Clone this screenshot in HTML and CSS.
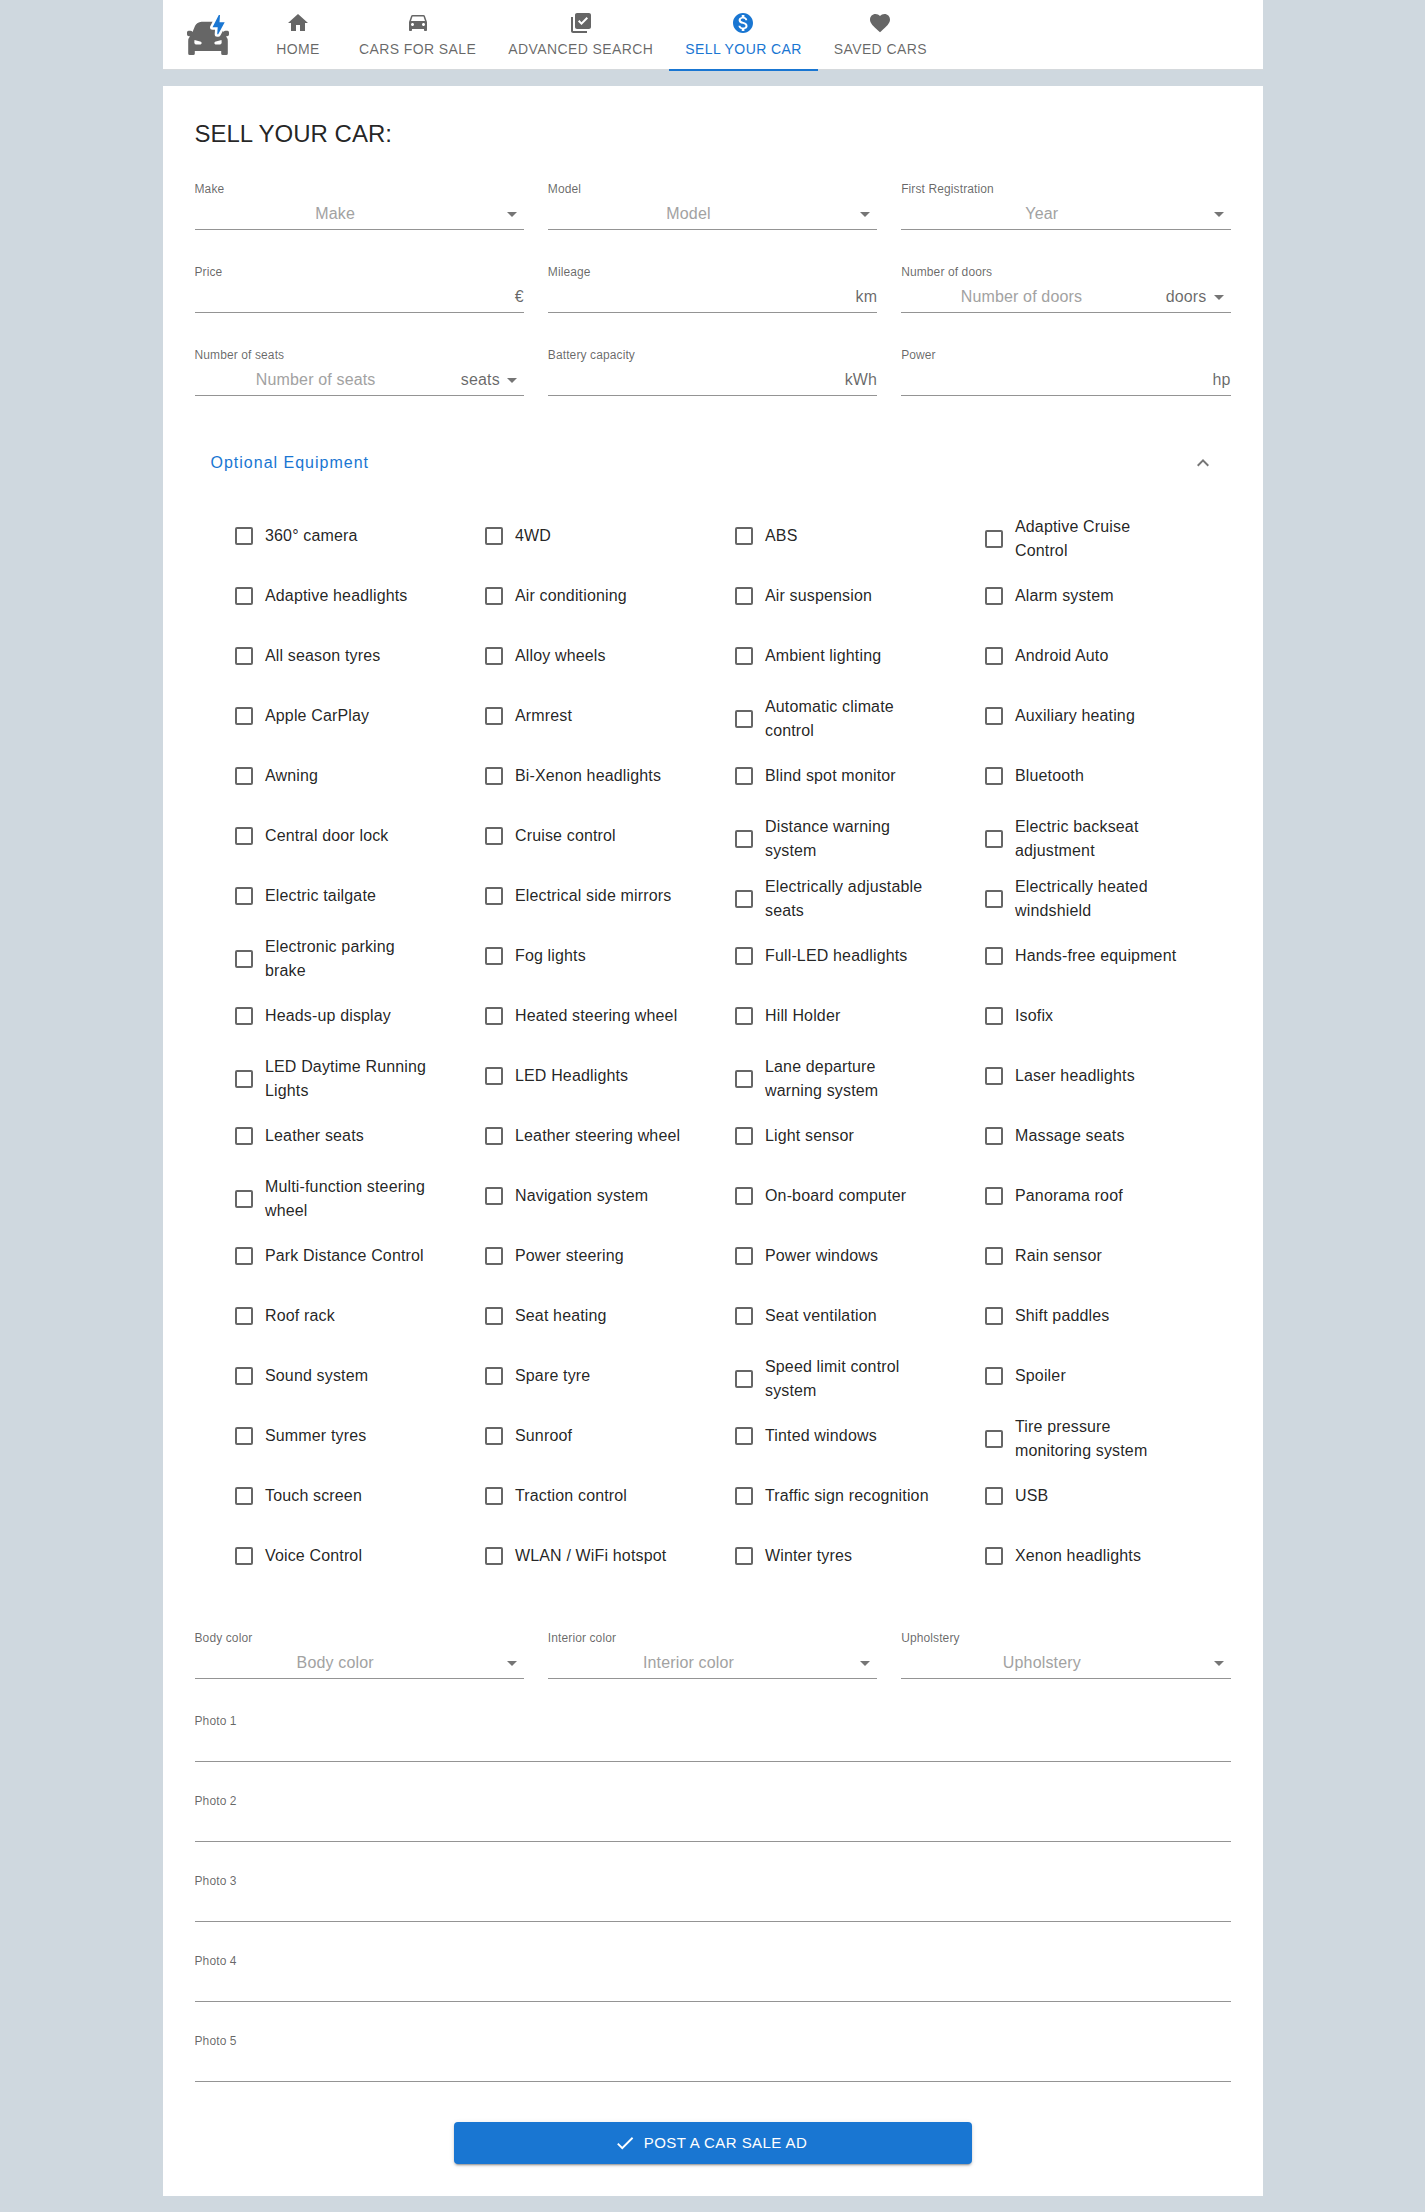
FILE: index.html
```html
<!DOCTYPE html>
<html lang="en">
<head>
<meta charset="utf-8">
<title>Sell your car</title>
<link rel="stylesheet" href="styles.css">
</head>
<body>
<header class="topbar">
  <svg class="logo" viewBox="0 0 42 41" width="42" height="41">
    <path class="logo-body" fill-rule="evenodd" d="M27.500 6.700H14.500Q10 7 8 11L5.500 17Q4.800 15.800 3.500 15.800H1.500Q0 15.800 0 17.500V19.500Q0 21.300 2 21.300H3Q1.200 23.500 1.200 26V38.500Q1.200 40 2.700 40H6.300Q7.800 40 7.800 38.500V36H34.200V38.500Q34.200 40 35.700 40H39.300Q40.800 40 40.800 38.500V26Q40.800 23.500 39 21.300H40Q42 21.300 42 19.500V17.500Q42 15.800 40.500 15.800H38.500Q37.200 15.800 36.500 17L34 11Q32 7 27.500 6.700ZM7.500 25L14 26.800Q15.500 28.500 13.500 29.500H9Q7.500 29.300 7.300 27.500ZM34.500 25L28 26.800Q26.500 28.500 28.500 29.500H33Q34.500 29.300 34.700 27.500Z"/>
    <path class="logo-bolt" d="M31.800 0H33L32.500 7.300H37.700L31.200 19.300H30.200L30.700 12.300H25.500Z"/>
  </svg>
  <nav class="tabs">
    <a class="tab"><svg class="icon" viewBox="0 0 24 24"><path d="M10 20v-6h4v6h5v-8h3L12 3 2 12h3v8z"/></svg>HOME</a>
    <a class="tab"><svg class="icon" viewBox="0 0 24 24"><path d="M18.920 5.010C18.720 4.420 18.160 4 17.500 4h-11c-.66 0-1.210.42-1.420 1.010L3 11v8c0 .55.45 1 1 1h1c.55 0 1-.45 1-1v-1h12v1c0 .55.45 1 1 1h1c.55 0 1-.45 1-1v-8l-2.080-5.990zM6.500 15c-.83 0-1.500-.67-1.500-1.500S5.670 12 6.500 12s1.500.67 1.500 1.500S7.330 15 6.500 15zm11 0c-.83 0-1.500-.67-1.500-1.500s.67-1.500 1.500-1.500 1.500.67 1.500 1.500-.67 1.500-1.500 1.500zM5 10l1.500-4.500h11L19 10H5z"/></svg>CARS FOR SALE</a>
    <a class="tab"><svg class="icon" viewBox="0 0 24 24"><path d="M20 2H8c-1.100 0-2 .9-2 2v12c0 1.100.9 2 2 2h12c1.100 0 2-.9 2-2V4c0-1.100-.9-2-2-2zm-7.530 12L9 10.500l1.400-1.410 2.070 2.080L17.600 6 19 7.410 12.470 14zM4 6H2v14c0 1.100.9 2 2 2h14v-2H4V6z"/></svg>ADVANCED SEARCH</a>
    <a class="tab active"><svg class="icon" viewBox="0 0 24 24"><path d="M12 2C6.480 2 2 6.480 2 12s4.480 10 10 10 10-4.480 10-10S17.520 2 12 2zm1.410 16.090V20h-2.670v-1.930c-1.710-.36-3.160-1.460-3.270-3.400h1.960c.1 1.050.82 1.870 2.650 1.870 1.960 0 2.400-.98 2.400-1.590 0-.83-.44-1.610-2.670-2.140-2.480-.6-4.180-1.620-4.180-3.670 0-1.720 1.390-2.840 3.110-3.210V4h2.670v1.950c1.860.45 2.790 1.860 2.850 3.390H14.300c-.05-1.110-.64-1.870-2.220-1.870-1.500 0-2.400.68-2.400 1.640 0 .84.65 1.390 2.670 1.910s4.180 1.390 4.180 3.910c-.01 1.830-1.380 2.830-3.120 3.160z"/></svg>SELL YOUR CAR</a>
    <a class="tab"><svg class="icon" viewBox="0 0 24 24"><path d="m12 21.350-1.450-1.320C5.400 15.360 2 12.280 2 8.500 2 5.420 4.420 3 7.500 3c1.740 0 3.410.81 4.500 2.090C13.090 3.810 14.760 3 16.500 3 19.580 3 22 5.420 22 8.500c0 3.780-3.400 6.860-8.550 11.540L12 21.350z"/></svg>SAVED CARS</a>
  </nav>
</header>

<main class="card">
  <h1 class="title">SELL YOUR CAR:</h1>

  <div class="fields">
    <div class="field"><span class="label">Make</span><div class="control"><span class="value">Make</span><svg class="icon" viewBox="0 0 24 24"><path d="m7 10 5 5 5-5z"/></svg></div></div>
    <div class="field"><span class="label">Model</span><div class="control"><span class="value">Model</span><svg class="icon" viewBox="0 0 24 24"><path d="m7 10 5 5 5-5z"/></svg></div></div>
    <div class="field"><span class="label">First Registration</span><div class="control"><span class="value">Year</span><svg class="icon" viewBox="0 0 24 24"><path d="m7 10 5 5 5-5z"/></svg></div></div>
    <div class="field"><span class="label">Price</span><div class="control"><span class="value"></span><span class="unit">€</span></div></div>
    <div class="field"><span class="label">Mileage</span><div class="control"><span class="value"></span><span class="unit">km</span></div></div>
    <div class="field"><span class="label">Number of doors</span><div class="control"><span class="value">Number of doors</span><span class="unit">doors</span><svg class="icon" viewBox="0 0 24 24"><path d="m7 10 5 5 5-5z"/></svg></div></div>
    <div class="field"><span class="label">Number of seats</span><div class="control"><span class="value">Number of seats</span><span class="unit">seats</span><svg class="icon" viewBox="0 0 24 24"><path d="m7 10 5 5 5-5z"/></svg></div></div>
    <div class="field"><span class="label">Battery capacity</span><div class="control"><span class="value"></span><span class="unit">kWh</span></div></div>
    <div class="field"><span class="label">Power</span><div class="control"><span class="value"></span><span class="unit">hp</span></div></div>
  </div>

  <section class="equipment">
    <div class="equipment-head"><span>Optional Equipment</span><svg class="icon" viewBox="0 0 24 24"><path d="m12 8-6 6 1.410 1.410L12 10.830l4.590 4.580L18 14z"/></svg></div>
    <div class="options">
      <label class="option"><i class="box"></i><span>360° camera</span></label>
      <label class="option"><i class="box"></i><span>4WD</span></label>
      <label class="option"><i class="box"></i><span>ABS</span></label>
      <label class="option"><i class="box"></i><span>Adaptive Cruise Control</span></label>
      <label class="option"><i class="box"></i><span>Adaptive headlights</span></label>
      <label class="option"><i class="box"></i><span>Air conditioning</span></label>
      <label class="option"><i class="box"></i><span>Air suspension</span></label>
      <label class="option"><i class="box"></i><span>Alarm system</span></label>
      <label class="option"><i class="box"></i><span>All season tyres</span></label>
      <label class="option"><i class="box"></i><span>Alloy wheels</span></label>
      <label class="option"><i class="box"></i><span>Ambient lighting</span></label>
      <label class="option"><i class="box"></i><span>Android Auto</span></label>
      <label class="option"><i class="box"></i><span>Apple CarPlay</span></label>
      <label class="option"><i class="box"></i><span>Armrest</span></label>
      <label class="option"><i class="box"></i><span>Automatic climate control</span></label>
      <label class="option"><i class="box"></i><span>Auxiliary heating</span></label>
      <label class="option"><i class="box"></i><span>Awning</span></label>
      <label class="option"><i class="box"></i><span>Bi-Xenon headlights</span></label>
      <label class="option"><i class="box"></i><span>Blind spot monitor</span></label>
      <label class="option"><i class="box"></i><span>Bluetooth</span></label>
      <label class="option"><i class="box"></i><span>Central door lock</span></label>
      <label class="option"><i class="box"></i><span>Cruise control</span></label>
      <label class="option"><i class="box"></i><span>Distance warning system</span></label>
      <label class="option"><i class="box"></i><span>Electric backseat adjustment</span></label>
      <label class="option"><i class="box"></i><span>Electric tailgate</span></label>
      <label class="option"><i class="box"></i><span>Electrical side mirrors</span></label>
      <label class="option"><i class="box"></i><span>Electrically adjustable seats</span></label>
      <label class="option"><i class="box"></i><span>Electrically heated windshield</span></label>
      <label class="option"><i class="box"></i><span>Electronic parking brake</span></label>
      <label class="option"><i class="box"></i><span>Fog lights</span></label>
      <label class="option"><i class="box"></i><span>Full-LED headlights</span></label>
      <label class="option"><i class="box"></i><span>Hands-free equipment</span></label>
      <label class="option"><i class="box"></i><span>Heads-up display</span></label>
      <label class="option"><i class="box"></i><span>Heated steering wheel</span></label>
      <label class="option"><i class="box"></i><span>Hill Holder</span></label>
      <label class="option"><i class="box"></i><span>Isofix</span></label>
      <label class="option"><i class="box"></i><span>LED Daytime Running Lights</span></label>
      <label class="option"><i class="box"></i><span>LED Headlights</span></label>
      <label class="option"><i class="box"></i><span>Lane departure warning system</span></label>
      <label class="option"><i class="box"></i><span>Laser headlights</span></label>
      <label class="option"><i class="box"></i><span>Leather seats</span></label>
      <label class="option"><i class="box"></i><span>Leather steering wheel</span></label>
      <label class="option"><i class="box"></i><span>Light sensor</span></label>
      <label class="option"><i class="box"></i><span>Massage seats</span></label>
      <label class="option"><i class="box"></i><span>Multi-function steering wheel</span></label>
      <label class="option"><i class="box"></i><span>Navigation system</span></label>
      <label class="option"><i class="box"></i><span>On-board computer</span></label>
      <label class="option"><i class="box"></i><span>Panorama roof</span></label>
      <label class="option"><i class="box"></i><span>Park Distance Control</span></label>
      <label class="option"><i class="box"></i><span>Power steering</span></label>
      <label class="option"><i class="box"></i><span>Power windows</span></label>
      <label class="option"><i class="box"></i><span>Rain sensor</span></label>
      <label class="option"><i class="box"></i><span>Roof rack</span></label>
      <label class="option"><i class="box"></i><span>Seat heating</span></label>
      <label class="option"><i class="box"></i><span>Seat ventilation</span></label>
      <label class="option"><i class="box"></i><span>Shift paddles</span></label>
      <label class="option"><i class="box"></i><span>Sound system</span></label>
      <label class="option"><i class="box"></i><span>Spare tyre</span></label>
      <label class="option"><i class="box"></i><span>Speed limit control system</span></label>
      <label class="option"><i class="box"></i><span>Spoiler</span></label>
      <label class="option"><i class="box"></i><span>Summer tyres</span></label>
      <label class="option"><i class="box"></i><span>Sunroof</span></label>
      <label class="option"><i class="box"></i><span>Tinted windows</span></label>
      <label class="option"><i class="box"></i><span>Tire pressure monitoring system</span></label>
      <label class="option"><i class="box"></i><span>Touch screen</span></label>
      <label class="option"><i class="box"></i><span>Traction control</span></label>
      <label class="option"><i class="box"></i><span>Traffic sign recognition</span></label>
      <label class="option"><i class="box"></i><span>USB</span></label>
      <label class="option"><i class="box"></i><span>Voice Control</span></label>
      <label class="option"><i class="box"></i><span>WLAN / WiFi hotspot</span></label>
      <label class="option"><i class="box"></i><span>Winter tyres</span></label>
      <label class="option"><i class="box"></i><span>Xenon headlights</span></label>
    </div>
  </section>

  <div class="fields">
    <div class="field"><span class="label">Body color</span><div class="control"><span class="value">Body color</span><svg class="icon" viewBox="0 0 24 24"><path d="m7 10 5 5 5-5z"/></svg></div></div>
    <div class="field"><span class="label">Interior color</span><div class="control"><span class="value">Interior color</span><svg class="icon" viewBox="0 0 24 24"><path d="m7 10 5 5 5-5z"/></svg></div></div>
    <div class="field"><span class="label">Upholstery</span><div class="control"><span class="value">Upholstery</span><svg class="icon" viewBox="0 0 24 24"><path d="m7 10 5 5 5-5z"/></svg></div></div>
  </div>

  <div class="photos">
    <div class="field"><span class="label">Photo 1</span><div class="control"></div></div>
    <div class="field"><span class="label">Photo 2</span><div class="control"></div></div>
    <div class="field"><span class="label">Photo 3</span><div class="control"></div></div>
    <div class="field"><span class="label">Photo 4</span><div class="control"></div></div>
    <div class="field"><span class="label">Photo 5</span><div class="control"></div></div>
  </div>

  <button class="submit"><svg class="submit-icon" viewBox="0 0 24 24"><path d="M9 16.170 4.830 12l-1.420 1.410L9 19 21 7l-1.410-1.410z"/></svg>POST A CAR SALE AD</button>
</main>
</body>
</html>
```

FILE: styles.css
```css
* { box-sizing: border-box; }
body {
  margin: 0;
  background: #cfd8df;
  color: rgba(0, 0, 0, 0.87);
  font-family: "Liberation Sans", Arial, sans-serif;
  font-size: 16px;
  line-height: 24px;
  letter-spacing: 0.15px;
}
.icon { width: 24px; height: 24px; flex: none; fill: currentColor; display: block; }

.topbar {
  width: 1100px;
  height: 70px;
  margin: 0 auto;
  padding-left: 24px;
  background: #fff;
  border-bottom: 1px solid #d5d9dc;
  display: flex;
  align-items: flex-start;
}
.logo { margin-top: 15px; flex: none; overflow: visible; }
.logo-body { fill: #666; }
.logo-bolt { fill: #1976d2; stroke: #fff; stroke-width: 5px; stroke-linejoin: round; paint-order: stroke; }
.tabs { display: flex; margin-left: 24.500px; }
.tab {
  min-width: 90px;
  height: 71px;
  padding: 11px 16px 0;
  display: flex;
  flex-direction: column;
  align-items: center;
  gap: 6px;
  font-size: 14px;
  line-height: 17px;
  letter-spacing: 0.4px;
  white-space: nowrap;
  color: rgba(0, 0, 0, 0.6);
}
.tab.active { color: #1976d2; border-bottom: 2px solid #1976d2; }

.card {
  width: 1100px;
  height: 2110px;
  margin: 16px auto;
  padding: 32px 32px 0;
  background: #fff;
}
.title { margin: 0 0 32px; font-size: 24px; font-weight: 400; line-height: 32px; letter-spacing: 0; }

.fields { display: grid; grid-template-columns: repeat(3, 1fr); column-gap: 24px; row-gap: 35px; }
.field { height: 48px; display: flex; flex-direction: column; color: rgba(0, 0, 0, 0.6); }
.label { font-size: 12px; line-height: 14px; height: 16px; letter-spacing: 0.11px; }
.control {
  height: 32px;
  padding-top: 4px;
  border-bottom: 1px solid #949494;
  display: flex;
  align-items: flex-start;
}
.control .value { flex: 1; padding-right: 24px; text-align: center; color: #a2a2a2; }
.control .icon { color: rgba(0, 0, 0, 0.54); }

.equipment { padding: 43px 16px 0; height: 1235px; }
.equipment-head {
  height: 48px;
  display: flex;
  align-items: center;
  justify-content: space-between;
  color: #1976d2;
  letter-spacing: 1px;
}
.equipment-head .icon { color: rgba(0, 0, 0, 0.54); }
.options {
  display: grid;
  grid-template-columns: repeat(4, 250px);
  grid-auto-rows: 48px;
  row-gap: 12px;
  padding: 28px 0 0 12.500px;
}
.option { display: flex; align-items: center; align-self: start; min-height: 42px; width: 210px; }
.option span { width: 168px; }
.box { width: 18px; height: 18px; margin: 12px; flex: none; border: 2px solid #666; border-radius: 2px; }

.photos { display: flex; flex-direction: column; gap: 32px; margin-top: 35px; }

.submit {
  width: 518px;
  height: 42px;
  margin: 40px auto 0;
  padding: 0;
  display: flex;
  align-items: center;
  justify-content: center;
  gap: 8px;
  border: 0;
  border-radius: 4px;
  background: #1976d2;
  color: #fff;
  font: 400 15px/26px "Liberation Sans", Arial, sans-serif;
  letter-spacing: 0.43px;
  box-shadow: 0 3px 1px -2px rgba(0,0,0,.2), 0 2px 2px 0 rgba(0,0,0,.14), 0 1px 5px 0 rgba(0,0,0,.12);
}
.submit-icon { width: 22px; height: 22px; margin-left: -4px; fill: currentColor; }
```
